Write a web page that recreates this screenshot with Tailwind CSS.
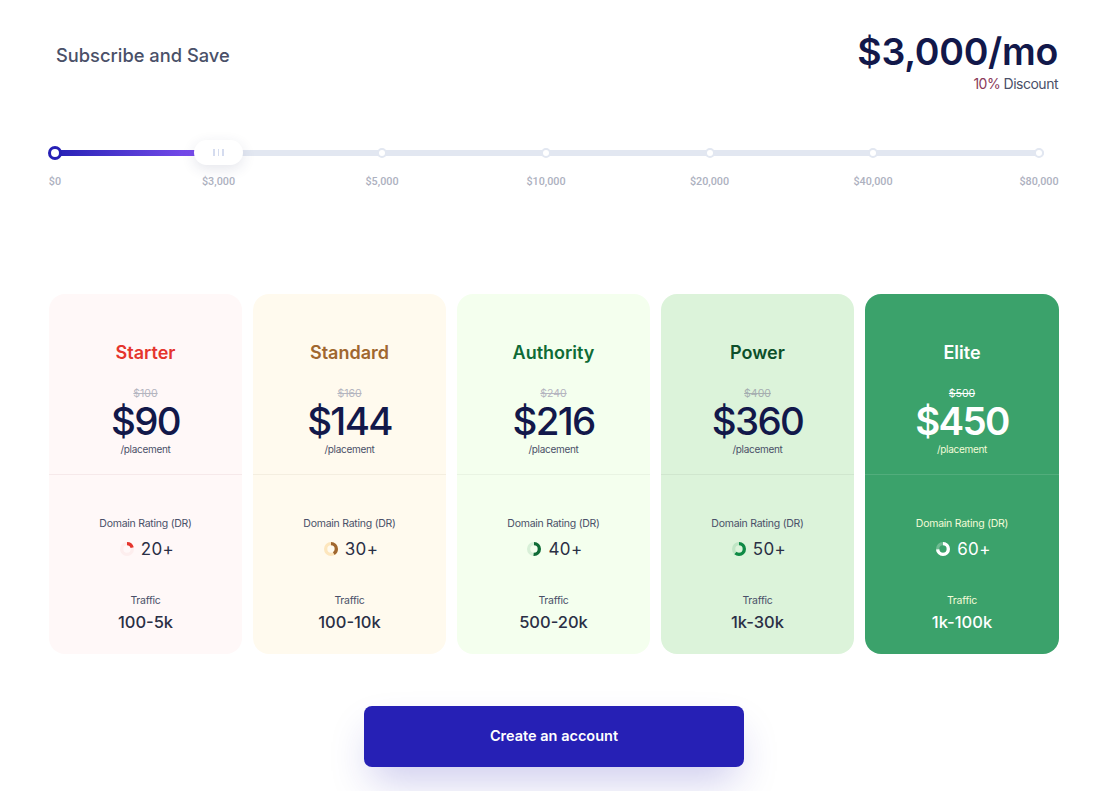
<!DOCTYPE html>
<html lang="en">
<head>
    <meta charset="UTF-8">
    <meta name="viewport" content="width=device-width, initial-scale=1.0">
    <title>Subscribe and Save</title>
    <script src="https://cdn.jsdelivr.net/npm/@tailwindcss/browser@4"></script>
</head>
<body class="bg-white font-['Inter',sans-serif] overflow-hidden">

    <div class="w-[1010px] ml-[49px] h-[791px]">

        <!-- Header -->
        <div class="flex justify-between pt-[29px] h-[132px]">
            <h1 class="pl-[7px] pt-[13px] text-[18.3px] leading-[26px] font-medium text-[#4a5068]">Subscribe and Save</h1>
            <div class="text-right pr-[1px]">
                <div class="text-[37.5px] leading-[46px] font-semibold tracking-[-0.3px] text-[#12184a]">$3,000/mo</div>
                <div class="text-[14px] leading-[18px] tracking-[-0.5px] text-[#4a5068]"><span class="text-[#8a3a5a]">10%</span> Discount</div>
            </div>
        </div>

        <!-- Slider -->
        <div class="relative h-[25px] ml-[6px] mr-[15px] mt-[8px] flex items-center">
            <div class="w-full h-[6px] rounded-full bg-[#e2e7f1]"></div>
            <div class="absolute left-0 w-[145px] h-[6px] bg-gradient-to-r from-[#2620b5] to-[#7c4dee]"></div>
            <div id="ticks"></div>
            <div class="absolute left-[139px] w-[49px] h-[25px] rounded-full bg-white shadow-[0_4px_14px_rgba(40,50,100,0.12)] flex items-center justify-center gap-[3px]">
                <span class="w-[1.5px] h-[7px] bg-[#d5dcef]"></span>
                <span class="w-[1.5px] h-[7px] bg-[#d5dcef]"></span>
                <span class="w-[1.5px] h-[7px] bg-[#d5dcef]"></span>
            </div>
        </div>
        <div id="labels" class="relative h-[14px] ml-[6px] mt-[10px] font-['Roboto',sans-serif] text-[10.8px] leading-[14px] font-medium text-[#adb1c0]"></div>

        <!-- Plans -->
        <div id="plans" class="flex gap-[11px] mt-[105px]"></div>

        <!-- CTA -->
        <button type="button" class="block w-[380px] h-[61px] mx-auto mt-[52px] pb-[2px] rounded-lg bg-[#2620b5] text-white text-[14.5px] font-semibold shadow-[0_20px_40px_-8px_rgba(38,32,181,0.25)]">Create an account</button>
    </div>

    <script>
        // x is the stop's distance from the start of the track
        const stops = [
            { label: '$0', x: 0 },
            { label: '$3,000', x: 163.5 },
            { label: '$5,000', x: 327 },
            { label: '$10,000', x: 491 },
            { label: '$20,000', x: 654.5 },
            { label: '$40,000', x: 818 },
            { label: '$80,000', x: 984 },
        ];

        const plans = [
            { name: 'Starter', was: '$100', price: '$90', dr: '20+', pct: 20, traffic: '100-5k', card: 'bg-[#fff8f8] text-[#2a2f45]', title: 'text-[#e5352d]', oldCls: 'text-[#b4b5c0]', priceCls: 'font-medium text-[#12184a]', sub: 'text-[#4a5068]', line: 'border-[#f6e9ea]', arc: '#e5352d', track: '#fdeeee' },
            { name: 'Standard', was: '$160', price: '$144', dr: '30+', pct: 40, traffic: '100-10k', card: 'bg-[#fffaee] text-[#2a2f45]', title: 'text-[#a0672f]', oldCls: 'text-[#b4b5c0]', priceCls: 'font-medium text-[#12184a]', sub: 'text-[#4a5068]', line: 'border-[#f4eee0]', arc: '#a0672f', track: '#fde6bd' },
            { name: 'Authority', was: '$240', price: '$216', dr: '40+', pct: 50, traffic: '500-20k', card: 'bg-[#f4ffee] text-[#2a2f45]', title: 'text-[#0f6b36]', oldCls: 'text-[#b4b5c0]', priceCls: 'font-medium text-[#12184a]', sub: 'text-[#4a5068]', line: 'border-[#e9f4e3]', arc: '#0f6b36', track: '#d8f0d8' },
            { name: 'Power', was: '$400', price: '$360', dr: '50+', pct: 60, traffic: '1k-30k', card: 'bg-[#dcf3da] text-[#2a2f45]', title: 'text-[#0c4f2a]', oldCls: 'text-[#a5aeb0]', priceCls: 'font-medium text-[#12184a]', sub: 'text-[#4a5068]', line: 'border-[#d0e6ce]', arc: '#0f8a45', track: '#bfe5c4' },
            { name: 'Elite', was: '$500', price: '$450', dr: '60+', pct: 72, traffic: '1k-100k', card: 'bg-[#3ba26b] text-white', title: 'text-white', oldCls: 'text-white', priceCls: 'font-semibold text-white', sub: 'text-[#f2fbd8]', line: 'border-[#52ad7c]', arc: '#ffffff', track: '#6fbb92' },
        ];

        document.getElementById('labels').innerHTML = stops.map(s =>
            `<span class="absolute top-0 -translate-x-1/2 whitespace-nowrap" style="left:${s.x}px">${s.label}</span>`).join('');

        // first stop is the start cap, the second sits under the thumb
        document.getElementById('ticks').innerHTML = stops.map((s, i) => i === 0
            ? `<span class="absolute top-[5.5px] -translate-x-1/2 w-[14px] h-[14px] rounded-full bg-white border-[3.5px] border-[#2620b5]" style="left:${s.x}px"></span>`
            : `<span class="absolute top-[7.5px] -translate-x-1/2 w-[10px] h-[10px] rounded-full bg-white border-2 border-[#e2e7f1]" style="left:${s.x}px"></span>`).join('');

        function ring(p) {
            const c = 2 * Math.PI * 5.35;
            return `<svg width="14" height="14" viewBox="0 0 14 14" class="-rotate-90">
                <circle cx="7" cy="7" r="5.35" fill="none" stroke="${p.track}" stroke-width="3.3"/>
                <circle cx="7" cy="7" r="5.35" fill="none" stroke="${p.arc}" stroke-width="3.3" stroke-dasharray="${c * p.pct / 100} ${c}"/>
            </svg>`;
        }

        document.getElementById('plans').innerHTML = plans.map(p => `
            <div class="w-[193px] last:grow h-[360px] rounded-[16px] text-center ${p.card}">
                <div class="h-[181px] pt-[47px] border-b ${p.line}">
                    <div class="text-[18px] leading-[24px] font-semibold ${p.title}">${p.name}</div>
                    <div class="mt-[22px] text-[10.5px] leading-[14px] line-through ${p.oldCls}">${p.was}</div>
                    <div class="text-[38.5px] leading-[40px] tracking-[-1.7px] ${p.priceCls}">${p.price}</div>
                    <div class="mt-[1px] text-[10px] leading-[14px] tracking-[-0.3px] ${p.sub}">/placement</div>
                </div>
                <div class="pt-[41px]">
                    <div class="text-[10.5px] leading-[16px] tracking-[-0.25px] ${p.sub}">Domain Rating (DR)</div>
                    <div class="mt-[4px] pl-[3px] flex items-center justify-center gap-[7px] text-[17px] leading-[26px] tracking-[0.4px]">${ring(p)}<span>${p.dr}</span></div>
                    <div class="mt-[31px] text-[10.5px] leading-[16px] tracking-[-0.25px] ${p.sub}">Traffic</div>
                    <div class="mt-[1px] text-[16.5px] leading-[24px] font-medium">${p.traffic}</div>
                </div>
            </div>`).join('');
    </script>

</body>
</html>
